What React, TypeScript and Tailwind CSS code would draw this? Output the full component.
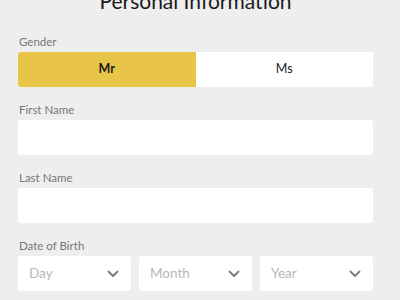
import React, { useState } from 'react';

const Chevron: React.FC = () => (
  <svg width="12" height="8" viewBox="0 0 12 8" fill="none" className="shrink-0">
    <path d="M1.5 1.5 L6 6 L10.5 1.5" stroke="#7a7a7a" strokeWidth="1.8" strokeLinecap="round" strokeLinejoin="round" />
  </svg>
);

const Field: React.FC<{ label: string; children: React.ReactNode }> = ({ label, children }) => (
  <div className="flex flex-col">
    <span className="text-[11.5px] leading-[14px] text-[#777777] mb-[3px] pl-px">{label}</span>
    {children}
  </div>
);

const App: React.FC = () => {
  const [gender, setGender] = useState<'Mr' | 'Ms'>('Mr');

  return (
    <div
      className="w-[400px] h-[300px] overflow-hidden bg-[#eeeeee]"
      style={{ fontFamily: 'Lato, "Noto Sans", sans-serif' }}
    >
      <div className="-mt-[13px] flex flex-col pl-[18px] pr-[27px]">
        {/* 제목 */}
        <h1 className="text-[21px] leading-[28px] text-[#1a1a1a] text-center mb-[20px]">
          Personal Information
        </h1>

        <div className="flex flex-col gap-[16px]">
          <Field label="Gender">
            <div className="flex h-[35px] rounded-[3px] overflow-hidden bg-white">
              {(['Mr', 'Ms'] as const).map(g => (
                <button
                  key={g}
                  onClick={() => setGender(g)}
                  className={
                    gender === g
                      ? 'flex-1 bg-[#e8c547] text-[12.5px] font-bold text-[#1a1a1a]'
                      : 'flex-1 bg-white text-[12.5px] text-[#222222]'
                  }
                >
                  {g}
                </button>
              ))}
            </div>
          </Field>

          <Field label="First Name">
            <input className="h-[35px] rounded-[3px] bg-white outline-none px-3 text-[13px]" />
          </Field>

          <Field label="Last Name">
            <input className="h-[35px] rounded-[3px] bg-white outline-none px-3 text-[13px]" />
          </Field>

          <Field label="Date of Birth">
            <div className="grid grid-cols-3 gap-[8px]">
              {['Day', 'Month', 'Year'].map(p => (
                <div key={p} className="h-[35px] rounded-[3px] bg-white flex items-center justify-between pl-[11px] pr-[12px]">
                  <span className="text-[13.5px] text-[#b8b8b8]">{p}</span>
                  <Chevron />
                </div>
              ))}
            </div>
          </Field>
        </div>
      </div>
    </div>
  );
};

export default App;
